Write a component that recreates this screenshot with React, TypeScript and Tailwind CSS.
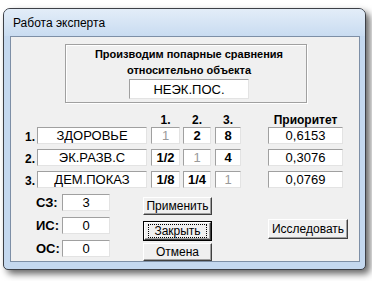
import React from 'react';

type BoxProps = { className?: string; children?: React.ReactNode };

// sunken edit box (classic 3D look)
function Field({ className = '', children }: BoxProps) {
  return (
    <div
      className={`flex items-center justify-center bg-white border border-t-[#a0a0a0] border-l-[#a0a0a0] border-r-[#e3e3e3] border-b-[#e3e3e3] text-[13px] leading-none ${className}`}
    >
      {children}
    </div>
  );
}

function Btn({ className = '', children, focused }: BoxProps & { focused?: boolean }) {
  if (focused) {
    return (
      <div className={`border border-black ${className}`}>
        <div className="w-full h-full flex items-center justify-center bg-[#f0f0f0] border border-t-white border-l-white border-r-[#404040] border-b-[#404040] shadow-[inset_-1px_-1px_0_#a0a0a0]">
          <span className="border border-dotted border-black px-[5px] leading-[12px] text-[12px]">{children}</span>
        </div>
      </div>
    );
  }
  return (
    <div
      className={`flex items-center justify-center bg-[#f0f0f0] border border-t-white border-l-white border-r-[#404040] border-b-[#404040] shadow-[inset_-1px_-1px_0_#a0a0a0] text-[12px] leading-none ${className}`}
    >
      {children}
    </div>
  );
}

const rows = [
  { n: '1.', name: 'ЗДОРОВЬЕ', cells: ['1', '2', '8'], p: '0,6153' },
  { n: '2.', name: 'ЭК.РАЗВ.С', cells: ['1/2', '1', '4'], p: '0,3076' },
  { n: '3.', name: 'ДЕМ.ПОКАЗ', cells: ['1/8', '1/4', '1'], p: '0,0769' },
];

function Cell({ v, className }: { v: string; className: string }) {
  const gray = v === '1';
  return (
    <Field className={`h-[17px] ${className} ${gray ? 'text-[#9a9a9a]' : 'font-bold'}`}>{v}</Field>
  );
}

export default function App() {
  return (
    <div className="w-[372px] h-[281px] bg-white overflow-hidden pl-[3px] pt-[8px] font-['Liberation_Sans',Arial,sans-serif] text-black">
      <div className="w-[363px] h-[262px] border border-[#3d4047] rounded-t-[7px] rounded-b-[5px] bg-[#c4d8ef] shadow-[4px_4px_7px_rgba(0,0,0,0.6)] flex flex-col overflow-hidden">
        {/* title bar */}
        <div className="h-[27px] shrink-0 flex items-center pl-[9px] bg-gradient-to-b from-[#e3edf8] to-[#c9dcf1] text-[12px]">
          Работа эксперта
        </div>

        <div className="flex pl-[6px] pr-[5px]">
          <div className="w-[350px] h-[226px] border border-[#7d8fa6] bg-[#f0f0f0] flex flex-col">
            {/* group box */}
            <div className="ml-[54px] mt-[7px] w-[242px] h-[59px] border border-[#a0a0a0] shadow-[inset_1px_1px_0_#fff,1px_1px_0_#fff] flex flex-col items-center pt-[1px] pl-[6px]">
              <div className="text-[11px] font-bold leading-[16px]">Производим попарные сравнения</div>
              <div className="text-[11px] font-bold leading-[16px]">относительно объекта</div>
              <Field className="w-[120px] h-[20px] mt-[1px]">НЕЭК.ПОС.</Field>
            </div>

            {/* column headers */}
            <div className="mt-[11px] h-[12px] flex text-[12px] font-bold leading-[12px]">
              <div className="w-[140px]" />
              <div className="w-[29px] text-center">1.</div>
              <div className="ml-[3px] w-[28px] text-center">2.</div>
              <div className="ml-[4px] w-[26px] text-center">3.</div>
              <div className="ml-[27px] w-[75px] text-center">Приоритет</div>
            </div>

            {/* matrix */}
            <div className="mt-[1px] flex flex-col gap-[5px]">
              {rows.map((r) => (
                <div key={r.n} className="flex h-[17px] items-center pl-[14px]">
                  <div className="w-[12px] text-[12px] font-bold pt-[3px]">{r.n}</div>
                  <Field className="w-[110px] h-[17px]">{r.name}</Field>
                  <Cell v={r.cells[0]} className="ml-[4px] w-[29px]" />
                  <Cell v={r.cells[1]} className="ml-[3px] w-[28px]" />
                  <Cell v={r.cells[2]} className="ml-[4px] w-[26px]" />
                  <Field className="ml-[27px] w-[75px] h-[17px]">{r.p}</Field>
                </div>
              ))}
            </div>

            {/* bottom part */}
            <div className="mt-[6px] flex items-start">
              <div className="flex flex-col gap-[6px]">
                {[
                  ['СЗ:', '3'],
                  ['ИС:', '0'],
                  ['ОС:', '0'],
                ].map(([l, v]) => (
                  <div key={l} className="flex items-center h-[17px]">
                    <div className="pl-[25px] w-[51px] text-[13px] font-bold">{l}</div>
                    <Field className="w-[48px] h-[17px]">{v}</Field>
                  </div>
                ))}
              </div>

              <div className="ml-[33px] mt-[3px] flex flex-col">
                <Btn className="w-[69px] h-[18px]">Применить</Btn>
                <Btn focused className="mt-[6px] w-[69px] h-[20px]">Закрыть</Btn>
                <Btn className="mt-[2px] w-[69px] h-[18px]">Отмена</Btn>
              </div>

              <Btn className="ml-[56px] mt-[25px] w-[80px] h-[20px]">Исследовать</Btn>
            </div>
          </div>
        </div>
      </div>
    </div>
  );
}
